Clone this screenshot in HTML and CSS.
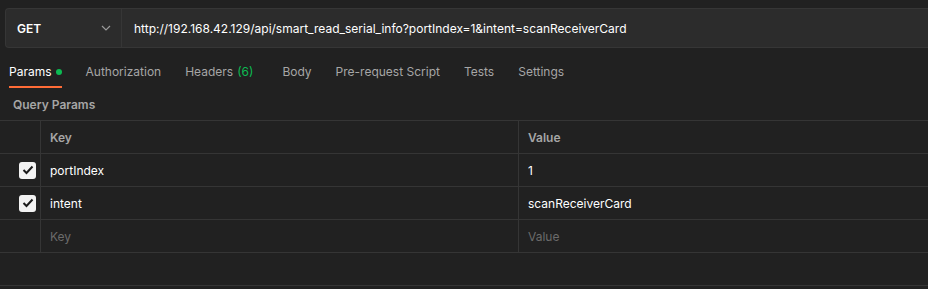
FILE: index.html
```html
<!doctype html>
<html lang="en">
<head>
    <meta charset="UTF-8">
    <title>Request</title>
    <link rel="stylesheet" href="styles.css">
</head>
<body>
    <!-- Request bar -->
    <div class="request">
        <div class="method">
            <span>GET</span>
            <svg class="chevron" width="10" height="6" viewBox="0 0 10 6"><path d="M1 1l4 4 4-4" fill="none" stroke="#9a9a9a" stroke-width="1.2"/></svg>
        </div>
        <div class="url">http://192.168.42.129/api/smart_read_serial_info?portIndex=1&amp;intent=scanReceiverCard</div>
    </div>

    <!-- Tabs -->
    <div class="tabs">
        <div class="tab active">Params <span class="dot"></span></div>
        <div class="tab">Authorization</div>
        <div class="tab headers">Headers <span class="count">(6)</span></div>
        <div class="tab">Body</div>
        <div class="tab">Pre-request Script</div>
        <div class="tab">Tests</div>
        <div class="tab">Settings</div>
    </div>

    <div class="section-title">Query Params</div>

    <!-- Params table -->
    <div class="table">
        <div class="row head">
            <div class="cell check"></div>
            <div class="cell">Key</div>
            <div class="cell">Value</div>
        </div>
        <div class="row">
            <div class="cell check"><span class="box"><svg width="12" height="10" viewBox="0 0 12 10"><path d="M1.5 5l3 3 6-6.5" fill="none" stroke="#1a1a1a" stroke-width="2"/></svg></span></div>
            <div class="cell">portIndex</div>
            <div class="cell">1</div>
        </div>
        <div class="row">
            <div class="cell check"><span class="box"><svg width="12" height="10" viewBox="0 0 12 10"><path d="M1.5 5l3 3 6-6.5" fill="none" stroke="#1a1a1a" stroke-width="2"/></svg></span></div>
            <div class="cell">intent</div>
            <div class="cell">scanReceiverCard</div>
        </div>
        <div class="row">
            <div class="cell check"></div>
            <div class="cell placeholder">Key</div>
            <div class="cell placeholder">Value</div>
        </div>
        <div class="row empty"></div>
    </div>
</body>
</html>
```

FILE: styles.css
```css
/* General */
body {
    margin: 0;
    font-family: Inter, 'Noto Sans', sans-serif;
    font-size: 12px;
    background-color: #212121;
    color: #ffffff;
}

/* Request bar */
.request {
    display: flex;
    height: 38px;
    margin: 8px 0 0 5px;
    background-color: #2c2c2c;
    border: 1px solid #363636;
    border-right: none;
    border-radius: 4px 0 0 4px;
}

.method {
    width: 94px;
    padding: 0 10px 0 11px;
    display: flex;
    align-items: center;
    justify-content: space-between;
    border-right: 1px solid #363636;
    font-weight: 600;
}

.url {
    display: flex;
    align-items: center;
    padding-left: 12px;
}

/* Tabs */
.tabs {
    display: flex;
    gap: 24px;
    padding: 0 9px;
    margin-top: 8px;
}

.tab {
    padding: 8px 0 6px;
    line-height: 16px;
    color: #a6a6a6;
    border-bottom: 2px solid transparent;
    display: flex;
    align-items: center;
    gap: 4px;
}

.tab.active {
    color: #ffffff;
    border-bottom-color: #ff6c37;
}

.tab.headers {
    margin-right: 5px;
}

.dot {
    width: 6px;
    height: 6px;
    border-radius: 50%;
    background-color: #0cbb52;
}

.count {
    color: #0cbb52;
}

.section-title {
    padding: 9px 13px 0;
    height: 23px;
    line-height: 16px;
    font-weight: 600;
    color: #a6a6a6;
}

/* Table */
.table {
    border-top: 1px solid #353535;
}

.row {
    display: grid;
    grid-template-columns: 41px 478px 1fr;
    height: 32px;
    border-bottom: 1px solid #353535;
}

.cell {
    display: flex;
    align-items: center;
    padding-left: 9px;
    border-right: 1px solid #353535;
}

.cell:last-child {
    border-right: none;
}

.cell.check {
    padding-left: 19px;
}

.head .cell {
    color: #a6a6a6;
    font-weight: 600;
}

.placeholder {
    color: #6b6b6b;
}

.box {
    width: 17px;
    height: 17px;
    border-radius: 3px;
    background-color: #f2f2f2;
    display: flex;
    align-items: center;
    justify-content: center;
}
```
